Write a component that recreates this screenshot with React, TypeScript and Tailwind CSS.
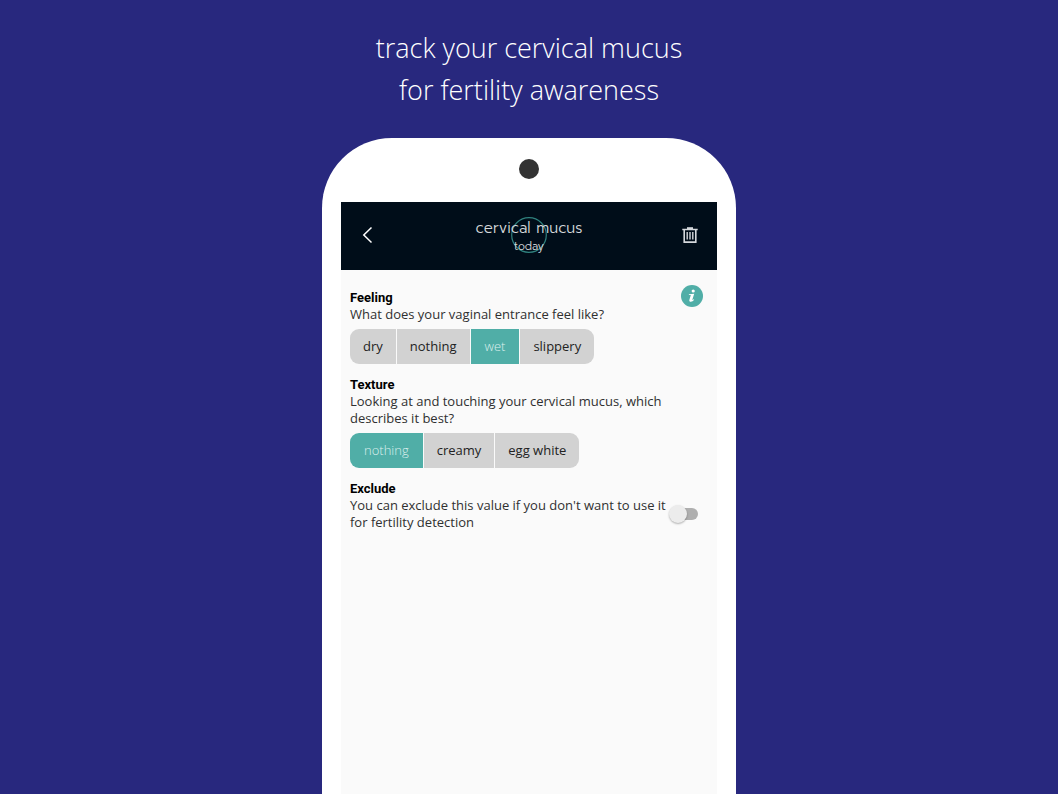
import { useState } from "react";

type ChoiceProps = {
  title: string;
  question: string;
  options: string[];
  initial: string;
};

function Choice({ title, question, options, initial }: ChoiceProps) {
  const [selected, setSelected] = useState(initial);
  return (
    <section aria-label={title}>
      <h2 className="font-['Roboto',sans-serif] text-[13px] leading-[17px] font-bold text-black">{title}</h2>
      <p className="pr-8 text-[13px] leading-[17px]">{question}</p>
      <div className="mt-1.5 flex w-fit gap-px overflow-hidden rounded-[9px]">
        {options.map((option) => (
          <button
            key={option}
            type="button"
            aria-pressed={option === selected}
            onClick={() => setSelected(option)}
            className={
              option === selected
                ? "h-[35px] bg-[#50aea7] px-[14px] text-[13px] font-light text-[#dceeed]"
                : "h-[35px] bg-[#d2d2d2] px-[13px] text-[13px] text-[#222222]"
            }
          >
            {option}
          </button>
        ))}
      </div>
    </section>
  );
}

export default function App() {
  const [excluded, setExcluded] = useState(false);
  return (
    <main className="flex min-h-screen flex-col items-center bg-[#28287e] font-['Open_Sans',sans-serif]">
      <h1 className="pt-[27px] text-center text-[27px] leading-[42px] font-light text-white">
        track your cervical mucus
        <br />
        for fertility awareness
      </h1>
      <div className="mt-[27px] flex w-full max-w-[414px] flex-1 flex-col rounded-t-[70px] bg-white px-[19px]">
        <div className="flex h-16 justify-center pt-[21px]">
          <span className="size-5 rounded-full bg-[#333333]" />
        </div>
        <div className="flex flex-1 flex-col bg-[#fafafa]">
          <header className="flex h-[68px] items-center justify-between bg-[#000d19] px-[17px] pb-0.5">
            <button type="button" aria-label="Back" className="text-white">
              <svg width="20" height="20" viewBox="0 0 20 20" fill="none" stroke="currentColor" strokeWidth="1.5">
                <path d="M13.5 2.5 5.8 10l7.7 7.5" />
              </svg>
            </button>
            <div className="relative pt-1 text-center font-['Prompt','Lato',sans-serif] font-light text-[#d5d8db]">
              <svg className="absolute top-[3px] left-1/2 size-9 -translate-x-1/2" viewBox="0 0 36 36" fill="none">
                <circle cx="18" cy="18" r="17.3" stroke="#2f817e" strokeWidth="1.2" />
              </svg>
              <p className="relative text-[15px] leading-5">cervical mucus</p>
              <p className="relative text-[11px] leading-[18px]">today</p>
            </div>
            <button type="button" aria-label="Delete" className="text-[#d5d8dc]">
              <svg width="20" height="20" viewBox="0 0 20 20" fill="none" stroke="currentColor">
                <path d="M2.3 4.5h15.4M4.2 5v12.1h11.6V5" strokeWidth="1.6" />
                <path d="M7 3.2h6" strokeWidth="2" />
                <path d="M7.2 7v7.5M10 7v7.5M12.8 7v7.5" strokeWidth="1.4" />
              </svg>
            </button>
          </header>
          <div className="relative flex flex-col gap-3 px-[9px] pt-[19px] pb-8 text-[#303030]">
            <button
              type="button"
              aria-label="Information"
              className="absolute top-[15px] right-[14px] size-[22px] rounded-full text-[#50aea7]"
            >
              <svg viewBox="0 0 22 22" className="size-full">
                <circle cx="11" cy="11" r="11" fill="currentColor" />
                <circle cx="12.2" cy="6" r="1.6" fill="white" />
                <path d="M8 9.2 13.2 8.7l-1.8 5.9c-.1.6.4.5 1.3-.3l.5.5c-1 1.3-2.1 2-3.3 2-1.3 0-1.9-.9-1.5-2.1l1.3-4.3c.1-.4-.2-.5-1.9-.4Z" fill="white" />
              </svg>
            </button>
            <Choice
              title="Feeling"
              question="What does your vaginal entrance feel like?"
              options={["dry", "nothing", "wet", "slippery"]}
              initial="wet"
            />
            <Choice
              title="Texture"
              question="Looking at and touching your cervical mucus, which describes it best?"
              options={["nothing", "creamy", "egg white"]}
              initial="nothing"
            />
            <section>
              <h2 className="font-['Roboto',sans-serif] text-[13px] leading-[17px] font-bold text-black">Exclude</h2>
              <div className="flex items-center justify-between pr-[10px]">
                <label htmlFor="exclude" className="flex-1 text-[13px] leading-[17px]">
                  You can exclude this value if you don't want to use it for fertility detection
                </label>
                <span className="relative flex h-[18px] w-[29px] shrink-0 items-center">
                  <input
                    id="exclude"
                    type="checkbox"
                    role="switch"
                    checked={excluded}
                    onChange={(event) => setExcluded(event.target.checked)}
                    className="peer ml-auto h-3 w-6 appearance-none rounded-full bg-[#afafaf] checked:bg-[#50aea7]"
                  />
                  <span className="pointer-events-none absolute top-0 left-0 size-[18px] rounded-full bg-[#ececec] shadow-[0_1px_2px_rgba(0,0,0,0.3)] peer-checked:left-[11px]" />
                </span>
              </div>
            </section>
          </div>
        </div>
      </div>
    </main>
  );
}
